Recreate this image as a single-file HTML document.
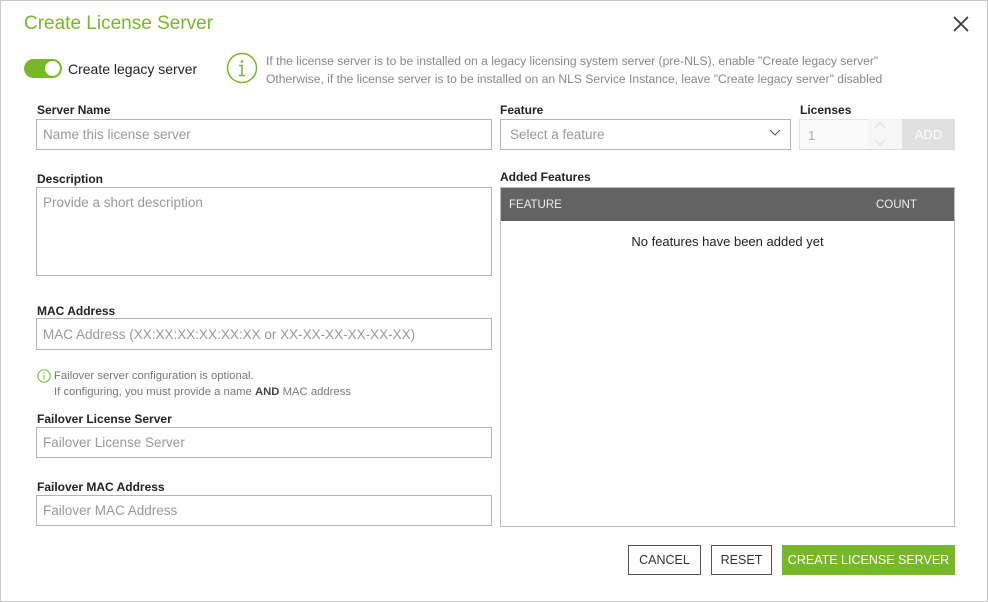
<!DOCTYPE html>
<html><head><meta charset="utf-8"><style>
*{box-sizing:border-box;margin:0;padding:0}
body{width:988px;height:602px;background:#fff;font-family:"Liberation Sans",sans-serif;color:#222;position:relative;overflow:hidden}
.frame{position:absolute;left:0;top:0;width:988px;height:602px;border:1px solid #c8c8c8}
.a{position:absolute;white-space:nowrap}
.lbl{font-size:12px;font-weight:bold;color:#222}
.inp{position:absolute;border:1px solid #b5b5b5;background:#fff;font-size:13.5px;color:#999;padding-left:6px;display:flex;align-items:center}
.btn{position:absolute;border:1px solid #555;background:#fff;font-size:12.5px;color:#333;display:flex;align-items:center;justify-content:center}
</style></head><body>
<div class="frame"></div>
<div class="a" style="left:24px;top:13px;font-size:19px;color:#76b82a">Create License Server</div>
<svg class="a" style="left:952px;top:15px" width="18" height="18"><path d="M2 2L16 16M16 2L2 16" stroke="#333" stroke-width="1.6"/></svg>
<div class="a" style="left:24px;top:59px;width:38px;height:19px;border-radius:10px;background:#76b82a"></div>
<div class="a" style="left:45px;top:61px;width:15px;height:15px;border-radius:50%;background:#fff"></div>
<div class="a" style="left:68px;top:61px;font-size:14px;color:#222">Create legacy server</div>
<svg class="a" style="left:226px;top:52px" width="32" height="32"><circle cx="16" cy="16" r="14.5" fill="none" stroke="#76b82a" stroke-width="1.5"/><circle cx="16" cy="9.5" r="1.3" fill="#76b82a"/><path d="M13 13.5h3v10M13 23.5h6" stroke="#76b82a" stroke-width="1.5" fill="none"/></svg>
<div class="a" style="left:266px;top:52px;font-size:12.1px;color:#888;line-height:18px">If the license server is to be installed on a legacy licensing system server (pre-NLS), enable "Create legacy server"<br>Otherwise, if the license server is to be installed on an NLS Service Instance, leave "Create legacy server" disabled</div>

<div class="a lbl" style="left:37px;top:103px">Server Name</div>
<div class="inp" style="left:36px;top:119px;width:456px;height:31px">Name this license server</div>
<div class="a lbl" style="left:37px;top:172px">Description</div>
<div class="inp" style="left:36px;top:187px;width:456px;height:89px;align-items:flex-start;padding-top:7px">Provide a short description</div>
<div class="a lbl" style="left:37px;top:304px">MAC Address</div>
<div class="inp" style="left:36px;top:318px;width:456px;height:32px">MAC Address (XX:XX:XX:XX:XX:XX or XX-XX-XX-XX-XX-XX)</div>
<svg class="a" style="left:37px;top:369px" width="14" height="14"><circle cx="7" cy="7" r="6.2" fill="none" stroke="#76b82a"/><circle cx="7" cy="4" r=".8" fill="#76b82a"/><path d="M7 6v4.5" stroke="#76b82a"/></svg>
<div class="a" style="left:54px;top:368px;font-size:11.3px;color:#777;line-height:16px">Failover server configuration is optional.<br>If configuring, you must provide a name <b style="color:#444">AND</b> MAC address</div>
<div class="a lbl" style="left:37px;top:412px">Failover License Server</div>
<div class="inp" style="left:36px;top:427px;width:456px;height:31px">Failover License Server</div>
<div class="a lbl" style="left:37px;top:480px">Failover MAC Address</div>
<div class="inp" style="left:36px;top:495px;width:456px;height:31px">Failover MAC Address</div>

<div class="a lbl" style="left:500px;top:103px">Feature</div>
<div class="inp" style="left:500px;top:119px;width:291px;height:31px;padding-left:9px">Select a feature</div>
<svg class="a" style="left:769px;top:129px" width="12" height="8"><path d="M1 1l5 5 5-5" stroke="#555" fill="none"/></svg>
<div class="a lbl" style="left:800px;top:103px">Licenses</div>
<div class="a" style="left:799px;top:119px;width:104px;height:31px;background:#f6f6f6;border-bottom:1px solid #ddd"></div>
<div class="a" style="left:799px;top:119px;width:69px;height:31px;background:#fafafa;border:1px solid #e2e2e2;border-right:none;font-size:13px;color:#aaa;padding:8px 0 0 8px">1</div>
<svg class="a" style="left:873px;top:121px" width="14" height="26"><path d="M2 7l5-5 5 5M2 19l5 5 5-5" stroke="#ddd" fill="none"/></svg>
<div class="a" style="left:902px;top:119px;width:53px;height:31px;background:#e0e0e0;color:#fff;font-size:13px;display:flex;align-items:center;justify-content:center">ADD</div>

<div class="a lbl" style="left:500px;top:170px">Added Features</div>
<div class="a" style="left:500px;top:187px;width:455px;height:340px;border:1px solid #bbb"></div>
<div class="a" style="left:501px;top:188px;width:453px;height:33px;background:#636363;color:#eee;font-size:11.5px"><span class="a" style="left:8px;top:11px">FEATURE</span><span class="a" style="left:375px;top:11px">COUNT</span></div>
<div class="a" style="left:501px;top:234px;width:453px;text-align:center;font-size:13px;color:#222">No features have been added yet</div>

<div class="btn" style="left:628px;top:545px;width:73px;height:30px">CANCEL</div>
<div class="btn" style="left:711px;top:545px;width:61px;height:30px">RESET</div>
<div class="btn" style="left:782px;top:545px;width:173px;height:30px;background:#76b82a;border-color:#76b82a;color:#fff">CREATE LICENSE SERVER</div>
</body></html>
